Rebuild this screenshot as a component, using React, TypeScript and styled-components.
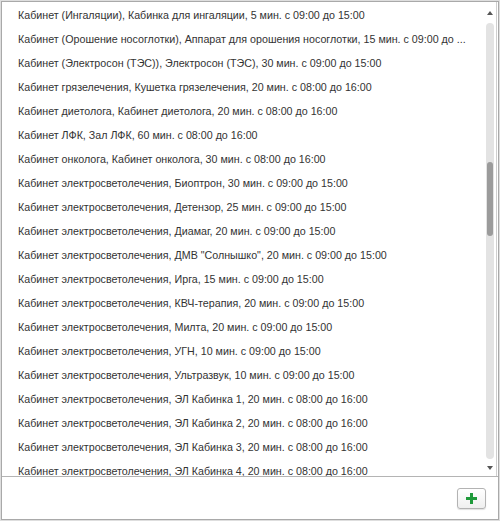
import React from "react";
import styled, { createGlobalStyle } from "styled-components";

const Global = createGlobalStyle`
  html, body { margin: 0; padding: 0; background: #fff; }
  #root { width: 500px; height: 521px; }
`;

const Frame = styled.div`
  box-sizing: border-box;
  width: 500px;
  height: 521px;
  border: 1px solid #dedede;
`;

const Inner = styled.div`
  box-sizing: border-box;
  height: 100%;
  min-width: 0;
  border: 1px solid #a9a9a9;
  display: flex;
  flex-direction: column;
  background: #fff;
`;

const ListArea = styled.div`
  display: flex;
  flex: none;
  height: 474px;
  border-bottom: 1px solid #b4b4b4;
  overflow: hidden;
`;

const Rows = styled.div`
  flex: 1;
  min-width: 0;
  overflow: hidden;
  padding-top: 1px;
`;

const Row = styled.div`
  height: 24px;
  line-height: 24px;
  padding-left: 16px;
  padding-right: 10px;
  font-family: Arial, "Liberation Sans", sans-serif;
  font-size: 10.7px;
  color: #333;
  white-space: nowrap;
  overflow: hidden;
  text-overflow: ellipsis;
`;

const ScrollCol = styled.div`
  flex: none;
  width: 12px;
  margin-right: 1px;
  border-right: 1px solid #cfcfcf;
  display: flex;
  flex-direction: column;
  align-items: center;
  padding: 9px 0 6px;
`;

const Arrow = styled.div<{ $down?: boolean }>`
  flex: none;
  width: 0;
  height: 0;
  border-left: 3px solid transparent;
  border-right: 3px solid transparent;
  ${(p) =>
    p.$down
      ? "border-top: 4px solid #555; margin-top: 7px;"
      : "border-bottom: 4px solid #555; margin-bottom: 8px;"}
`;

const Track = styled.div`
  flex: 1;
  width: 8px;
  border-radius: 4px;
  background: #e3e3e3;
  display: flex;
  justify-content: center;
`;

const Thumb = styled.div`
  width: 6px;
  height: 74px;
  margin-top: 139px;
  border-radius: 3px;
  background: #9b9b9b;
`;

const Footer = styled.div`
  flex: 1;
  display: flex;
  justify-content: flex-end;
  align-items: flex-start;
  padding: 11px 12px 0 0;
`;

const AddButton = styled.button`
  box-sizing: border-box;
  width: 29px;
  height: 21px;
  padding: 0;
  border: 1px solid #b3b3b3;
  border-radius: 3px;
  background: linear-gradient(#ffffff, #efefef);
  box-shadow: 0 1px 1px rgba(0, 0, 0, 0.12);
  display: flex;
  align-items: center;
  justify-content: center;
  cursor: pointer;
`;

const items = [
  "Кабинет (Ингаляции), Кабинка для ингаляции, 5 мин. с 09:00 до 15:00",
  "Кабинет (Орошение носоглотки), Аппарат для орошения носоглотки, 15 мин. с 09:00 до ...",
  "Кабинет (Электросон (ТЭС)), Электросон (ТЭС), 30 мин. с 09:00 до 15:00",
  "Кабинет грязелечения, Кушетка грязелечения, 20 мин. с 08:00 до 16:00",
  "Кабинет диетолога, Кабинет диетолога, 20 мин. с 08:00 до 16:00",
  "Кабинет ЛФК, Зал ЛФК, 60 мин. с 08:00 до 16:00",
  "Кабинет онколога, Кабинет онколога, 30 мин. с 08:00 до 16:00",
  "Кабинет электросветолечения, Биоптрон, 30 мин. с 09:00 до 15:00",
  "Кабинет электросветолечения, Детензор, 25 мин. с 09:00 до 15:00",
  "Кабинет электросветолечения, Диамаг, 20 мин. с 09:00 до 15:00",
  "Кабинет электросветолечения, ДМВ \"Солнышко\", 20 мин. с 09:00 до 15:00",
  "Кабинет электросветолечения, Ирга, 15 мин. с 09:00 до 15:00",
  "Кабинет электросветолечения, КВЧ-терапия, 20 мин. с 09:00 до 15:00",
  "Кабинет электросветолечения, Милта, 20 мин. с 09:00 до 15:00",
  "Кабинет электросветолечения, УГН, 10 мин. с 09:00 до 15:00",
  "Кабинет электросветолечения, Ультразвук, 10 мин. с 09:00 до 15:00",
  "Кабинет электросветолечения, ЭЛ Кабинка 1, 20 мин. с 08:00 до 16:00",
  "Кабинет электросветолечения, ЭЛ Кабинка 2, 20 мин. с 08:00 до 16:00",
  "Кабинет электросветолечения, ЭЛ Кабинка 3, 20 мин. с 08:00 до 16:00",
  "Кабинет электросветолечения, ЭЛ Кабинка 4, 20 мин. с 08:00 до 16:00",
];

const PlusIcon = () => (
  <svg width="11" height="11" viewBox="0 0 11 11">
    <rect x="4" y="0" width="3" height="11" fill="#1f9a3b" />
    <rect x="0" y="4" width="11" height="3" fill="#1f9a3b" />
  </svg>
);

export default function App() {
  return (
    <>
      <Global />
      <Frame>
        <Inner>
          <ListArea>
            <Rows>
              {items.map((t, i) => (
                <Row key={i}>{t}</Row>
              ))}
            </Rows>
            <ScrollCol>
              <Arrow />
              <Track>
                <Thumb />
              </Track>
              <Arrow $down />
            </ScrollCol>
          </ListArea>
          <Footer>
            <AddButton aria-label="Добавить">
              <PlusIcon />
            </AddButton>
          </Footer>
        </Inner>
      </Frame>
    </>
  );
}
